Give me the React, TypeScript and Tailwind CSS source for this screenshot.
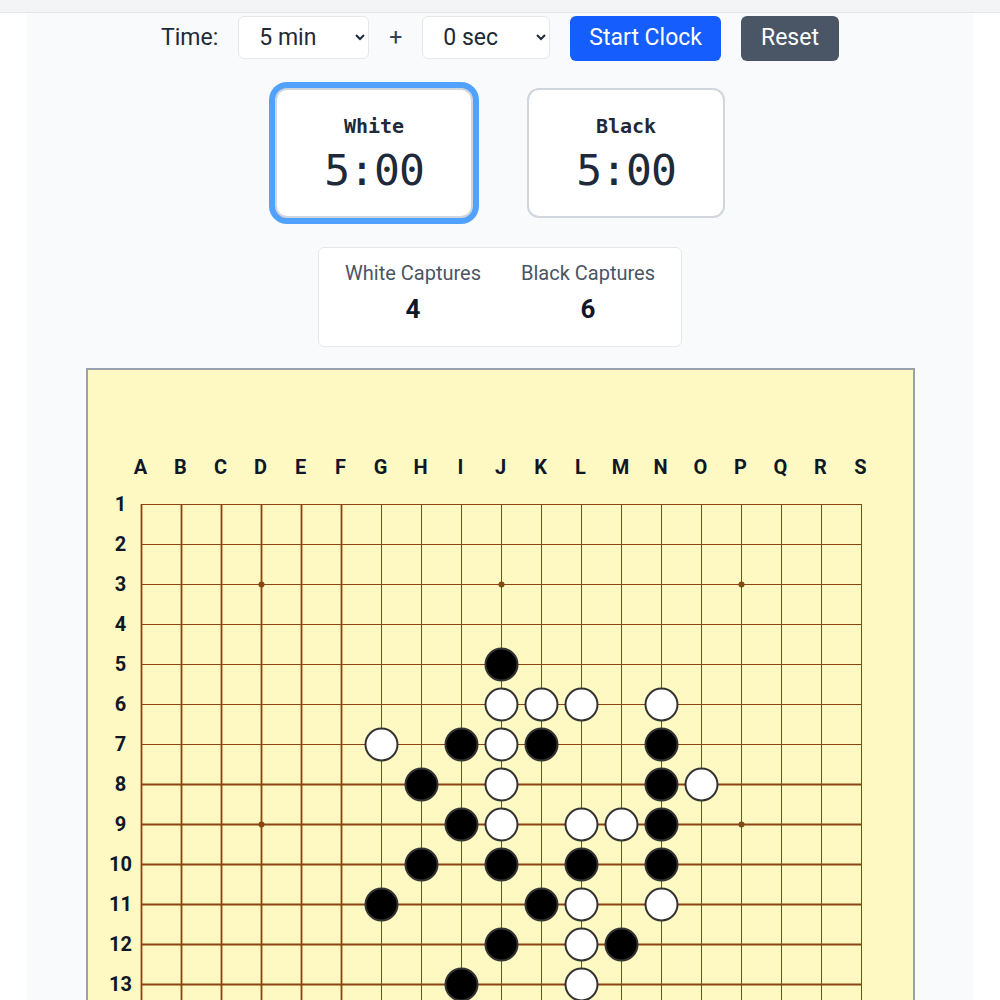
import { useState } from "react";

const COLS = "ABCDEFGHIJKLMNOPQRS".split("");
const SIZE = 19;
const CELL = 40;
const PAD = 20;

type Stone = { c: string; r: number; color: "b" | "w" };

const stones: Stone[] = [
  { c: "J", r: 5, color: "b" },
  { c: "J", r: 6, color: "w" },
  { c: "K", r: 6, color: "w" },
  { c: "L", r: 6, color: "w" },
  { c: "N", r: 6, color: "w" },
  { c: "G", r: 7, color: "w" },
  { c: "I", r: 7, color: "b" },
  { c: "J", r: 7, color: "w" },
  { c: "K", r: 7, color: "b" },
  { c: "N", r: 7, color: "b" },
  { c: "H", r: 8, color: "b" },
  { c: "J", r: 8, color: "w" },
  { c: "N", r: 8, color: "b" },
  { c: "O", r: 8, color: "w" },
  { c: "I", r: 9, color: "b" },
  { c: "J", r: 9, color: "w" },
  { c: "L", r: 9, color: "w" },
  { c: "M", r: 9, color: "w" },
  { c: "N", r: 9, color: "b" },
  { c: "H", r: 10, color: "b" },
  { c: "J", r: 10, color: "b" },
  { c: "L", r: 10, color: "b" },
  { c: "N", r: 10, color: "b" },
  { c: "G", r: 11, color: "b" },
  { c: "K", r: 11, color: "b" },
  { c: "L", r: 11, color: "w" },
  { c: "N", r: 11, color: "w" },
  { c: "J", r: 12, color: "b" },
  { c: "L", r: 12, color: "w" },
  { c: "M", r: 12, color: "b" },
  { c: "I", r: 13, color: "b" },
  { c: "L", r: 13, color: "w" },
];

// hoshi, as drawn by the board (rows 3 / 9 / 15, cols D / J / P)
const starPoints = [2, 8, 14].flatMap((r) => [3, 9, 15].map((c) => ({ r, c })));

function ClockCard({ name, time, active }: { name: string; time: string; active?: boolean }) {
  return (
    <div
      className={
        "flex h-[130px] w-[198px] flex-col items-center rounded-xl border-2 border-gray-300 bg-white pt-[22px] font-['DejaVu_Sans_Mono',monospace] text-gray-800 " +
        (active ? "ring-[6px] ring-blue-400" : "")
      }
    >
      <div className="text-xl font-bold leading-7">{name}</div>
      <div className="mt-[6px] text-[43px] leading-[48px] tracking-[-1px]">{time}</div>
    </div>
  );
}

function Board() {
  const span = (SIZE - 1) * CELL;
  return (
    <svg width={SIZE * CELL} height={SIZE * CELL} className="-ml-5 block">
      {Array.from({ length: SIZE }, (_, i) => {
        const p = PAD + i * CELL + 0.5;
        return (
          <g key={i}>
            <line x1={PAD} x2={PAD + span + 1} y1={p} y2={p} stroke="#8b4513" strokeWidth={i >= 7 ? 1.8 : 1} />
            <line y1={PAD} y2={PAD + span + 1} x1={p} x2={p} stroke="#8b4513" strokeWidth={i <= 5 ? 1.8 : 1} />
          </g>
        );
      })}
      {starPoints.map((s) => (
        <circle
          key={`${s.r}-${s.c}`}
          cx={PAD + s.c * CELL + 0.5}
          cy={PAD + s.r * CELL + 0.5}
          r={3}
          fill="#8b4513"
        />
      ))}
      {stones.map((s) => (
        <circle
          key={`${s.c}${s.r}`}
          cx={PAD + COLS.indexOf(s.c) * CELL + 0.5}
          cy={PAD + (s.r - 1) * CELL + 0.5}
          r={16}
          fill={s.color === "b" ? "#000" : "#fff"}
          stroke="#333"
          strokeWidth={2}
        />
      ))}
    </svg>
  );
}

export default function App() {
  const [minutes, setMinutes] = useState("5");
  const [increment, setIncrement] = useState("0");

  return (
    <div className="min-h-screen bg-white font-['Roboto',sans-serif] text-gray-800">
      <div className="h-[13px] border-b border-gray-200 bg-gray-100" />
      <div className="mx-auto w-[946px] bg-gray-50 pb-10 pt-[3px]">
        <div className="flex items-start justify-center gap-5">
          <span className="mt-[8px] text-[23px] leading-7 text-gray-800">Time:</span>
          <select
            value={minutes}
            onChange={(e) => setMinutes(e.target.value)}
            className="h-[43px] w-[131px] rounded-md border border-gray-200 bg-white pl-4 pr-2 text-[23px] text-gray-800"
          >
            <option value="1">1 min</option>
            <option value="3">3 min</option>
            <option value="5">5 min</option>
            <option value="10">10 min</option>
          </select>
          <span className="mt-[8px] text-[23px] leading-7 text-gray-700">+</span>
          <select
            value={increment}
            onChange={(e) => setIncrement(e.target.value)}
            className="h-[43px] w-[128px] rounded-md border border-gray-200 bg-white pl-4 pr-2 text-[23px] text-gray-800"
          >
            <option value="0">0 sec</option>
            <option value="2">2 sec</option>
            <option value="5">5 sec</option>
            <option value="10">10 sec</option>
          </select>
          <button className="h-[45px] rounded-md bg-blue-600 px-[19px] text-[23px] text-white">Start Clock</button>
          <button className="h-[45px] rounded-md bg-gray-600 px-5 text-[23px] text-white">Reset</button>
        </div>

        <div className="mt-[27px] flex justify-center gap-[54px]">
          <ClockCard name="White" time="5:00" active />
          <ClockCard name="Black" time="5:00" />
        </div>

        <div className="mx-auto mt-[29px] flex h-[100px] w-[364px] justify-center gap-10 rounded-md border border-gray-200 bg-white pt-[11px]">
          <div className="flex flex-col items-center">
            <span className="text-xl leading-7 text-gray-600">White Captures</span>
            <span className="mt-1.5 text-[26px] font-bold leading-8 text-gray-900">4</span>
          </div>
          <div className="flex flex-col items-center">
            <span className="text-xl leading-7 text-gray-600">Black Captures</span>
            <span className="mt-1.5 text-[26px] font-bold leading-8 text-gray-900">6</span>
          </div>
        </div>

        <div className="mx-auto mt-[21px] w-[829px] border-2 border-gray-400 bg-yellow-100 pb-10 pt-20">
          <div className="flex h-[34px] items-center pl-[33px]">
            {COLS.map((c) => (
              <div key={c} className="w-10 text-center text-xl font-bold text-gray-900">
                {c}
              </div>
            ))}
          </div>
          <div className="flex pl-[13px]">
            <div className="relative z-10 flex w-10 flex-col">
              {Array.from({ length: SIZE }, (_, i) => (
                <div key={i} className="flex h-10 items-center justify-center text-xl font-bold text-gray-900">
                  {i + 1}
                </div>
              ))}
            </div>
            <Board />
          </div>
        </div>
      </div>
    </div>
  );
}
